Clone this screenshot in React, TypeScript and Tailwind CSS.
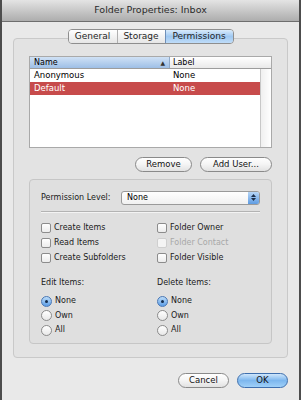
import React from 'react';

function Checkbox({ label, disabled }: { label: string; disabled?: boolean }) {
  return (
    <div className="flex h-[15px] items-center gap-[3px]">
      <span
        className={
          disabled
            ? 'h-[10px] w-[10px] rounded-[2px] border border-[#cfcfcf] bg-[#f4f4f4]'
            : 'h-[10px] w-[10px] rounded-[2px] border border-[#8c8c8c] bg-gradient-to-b from-white to-[#ececec]'
        }
      />
      <span className={disabled ? 'text-[#a8a8a8]' : 'text-[#1a1a1a]'}>{label}</span>
    </div>
  );
}

function Radio({ label, checked }: { label: string; checked?: boolean }) {
  return (
    <div className="flex h-[14.5px] items-center gap-[3px]">
      {checked ? (
        <span className="flex h-[11px] w-[11px] items-center justify-center rounded-full border border-[#4a77b5] bg-gradient-to-b from-[#bcdcf8] to-[#5b9de6]">
          <span className="h-[3px] w-[3px] rounded-full bg-[#142c4d]" />
        </span>
      ) : (
        <span className="h-[11px] w-[11px] rounded-full border border-[#8c8c8c] bg-gradient-to-b from-white to-[#e8e8e8]" />
      )}
      <span className="text-[#1a1a1a]">{label}</span>
    </div>
  );
}

function PillButton({ children, w, primary }: { children: React.ReactNode; w: string; primary?: boolean }) {
  return (
    <div
      className={
        (primary
          ? 'border-[#3e6fae] bg-gradient-to-b from-[#cfe6fb] via-[#7db7ee] to-[#9fd0f8] '
          : 'border-[#8a8a8a] bg-gradient-to-b from-white via-[#f4f4f4] to-[#e2e2e2] ') +
        w +
        ' flex h-[15px] items-center justify-center rounded-full border text-[8.5px] text-[#111]'
      }
    >
      {children}
    </div>
  );
}

export default function App() {
  return (
    <div className="flex h-[400px] w-[301px] flex-col overflow-hidden border-x-2 border-[#4d4d4d] bg-[#e9e9e9] font-['DejaVu_Sans',Arial,sans-serif] text-[8px] text-black">
      {/* title bar */}
      <div className="flex h-[22px] shrink-0 items-center justify-center border-b border-[#6e6e6e] bg-gradient-to-b from-[#e4e4e4] to-[#adadad] text-[9.5px] text-[#2a2a2a]">
        Folder Properties: Inbox
      </div>

      <div className="flex flex-col px-[11px] pt-[7px]">
        {/* tabs */}
        <div className="relative z-10 flex justify-center">
          <div className="flex h-[15px] overflow-hidden rounded-[4px] border border-[#8e8e8e] text-[9px] text-[#1f1f1f]">
            <div className="flex w-[48px] items-center justify-center bg-gradient-to-b from-white to-[#e6e6e6]">General</div>
            <div className="flex w-[48px] items-center justify-center border-l border-[#b0b0b0] bg-gradient-to-b from-white to-[#e6e6e6]">Storage</div>
            <div className="flex w-[68px] items-center justify-center border-l border-[#6f8fb8] bg-gradient-to-b from-[#d9ebfb] via-[#9fc8f1] to-[#bfdcf8]">Permissions</div>
          </div>
        </div>

        {/* group box */}
        <div className="-mt-[6px] flex flex-col rounded-[4px] border border-[#c9c9c9] bg-[#e3e3e3] px-[15px] pb-[13px] pt-[17px]">
          {/* table */}
          <div className="flex h-[92px] flex-col border border-[#a9a9a9] bg-white text-[8.5px]">
            <div className="flex h-[12px] shrink-0 border-b border-[#9c9c9c] text-[8px]">
              <div className="flex w-[140px] items-center justify-between border-r border-[#8fa9c8] bg-gradient-to-b from-[#cfe1f5] to-[#9ebfe6] pl-[4px] pr-[4px]">
                <span>Name</span>
                <span className="text-[6px] text-[#333]">▲</span>
              </div>
              <div className="flex flex-1 items-center bg-gradient-to-b from-white to-[#e9e9e9] pl-[3px]">Label</div>
            </div>
            <div className="flex flex-1">
              <div className="flex flex-1 flex-col">
                <div className="flex h-[13px] items-center">
                  <span className="w-[140px] pl-[4px]">Anonymous</span>
                  <span className="pl-[3px]">None</span>
                </div>
                <div className="flex h-[13px] items-center bg-[#c74b4b] text-white">
                  <span className="w-[140px] pl-[4px]">Default</span>
                  <span className="pl-[3px]">None</span>
                </div>
              </div>
              <div className="w-[11px] border-l border-[#c8c8c8] bg-gradient-to-r from-[#f0f0f0] to-white" />
            </div>
          </div>

          {/* remove / add */}
          <div className="mt-[9px] flex justify-end gap-[8px]">
            <PillButton w="w-[57px]">Remove</PillButton>
            <PillButton w="w-[72px]">Add User...</PillButton>
          </div>

          {/* inner box */}
          <div className="mt-[7px] flex flex-col rounded-[4px] border border-[#c6c6c6] bg-[#dfdfdf] px-[11px] pb-[5px] pt-[10px]">
            <div className="flex h-[15px] items-center">
              <span className="w-[80px] text-[#1a1a1a]">Permission Level:</span>
              <div className="flex h-[14px] flex-1 items-center overflow-hidden rounded-[3px] border border-[#9a9a9a] bg-gradient-to-b from-white to-[#f1f1f1]">
                <span className="flex-1 pl-[5px] text-[8px]">None</span>
                <div className="flex h-full w-[11px] flex-col items-center justify-center gap-[1px] bg-gradient-to-b from-[#b7d6f6] to-[#5e9ce2]">
                  <svg width="5" height="3" viewBox="0 0 5 3"><path d="M2.5 0L5 3H0z" fill="#1d2f4a" /></svg>
                  <svg width="5" height="3" viewBox="0 0 5 3"><path d="M0 0h5L2.5 3z" fill="#1d2f4a" /></svg>
                </div>
              </div>
            </div>

            <div className="mt-[6px] h-[2px] border-t border-b border-t-[#b3b3b3] border-b-[#f3f3f3]" />

            <div className="mt-[7px] grid grid-cols-[116px_1fr]">
              <Checkbox label="Create Items" />
              <Checkbox label="Folder Owner" />
              <Checkbox label="Read Items" />
              <Checkbox label="Folder Contact" disabled />
              <Checkbox label="Create Subfolders" />
              <Checkbox label="Folder Visible" />
            </div>

            <div className="mt-[11px] grid grid-cols-[116px_1fr]">
              <div className="flex flex-col">
                <span className="h-[13px] leading-[13px] text-[#1a1a1a]">Edit Items:</span>
                <div className="mt-[5px] flex flex-col">
                  <Radio label="None" checked />
                  <Radio label="Own" />
                  <Radio label="All" />
                </div>
              </div>
              <div className="flex flex-col">
                <span className="h-[13px] leading-[13px] text-[#1a1a1a]">Delete Items:</span>
                <div className="mt-[5px] flex flex-col">
                  <Radio label="None" checked />
                  <Radio label="Own" />
                  <Radio label="All" />
                </div>
              </div>
            </div>
          </div>
        </div>

        {/* cancel / ok */}
        <div className="mt-[15px] flex justify-end gap-[8px]">
          <PillButton w="w-[51px]">Cancel</PillButton>
          <PillButton w="w-[51px]" primary>
            OK
          </PillButton>
        </div>
      </div>
    </div>
  );
}
